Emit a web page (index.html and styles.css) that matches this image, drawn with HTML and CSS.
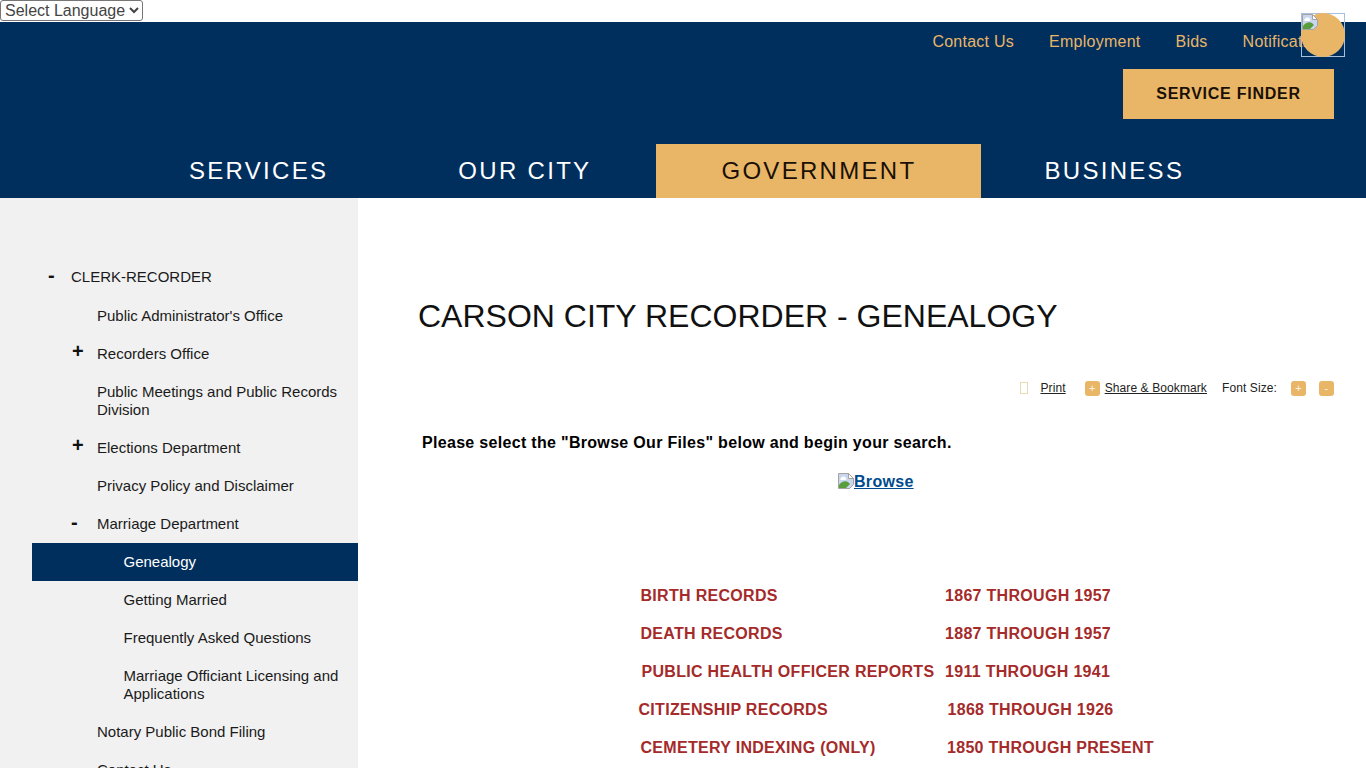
FILE: index.html
```html
<!DOCTYPE html>
<html lang="en">
  <head>
    <meta charset="UTF-8" />
    <meta name="viewport" content="width=device-width, initial-scale=1.0" />
    <title>Carson City Recorder - Genealogy</title>
    <link rel="stylesheet" href="styles.css">
  </head>
  <body>
    <div class="language-bar">
      <select class="language-select">
        <option>Select Language</option>
      </select>
    </div>

    <header class="site-header">
      <div class="top-links">
        <a href="#">Contact Us</a>
        <a href="#">Employment</a>
        <a href="#">Bids</a>
        <a href="#">Notifications</a>
      </div>
      <div class="search-toggle">
        <span class="search-circle"></span>
        <svg class="broken-img" width="16" height="16" viewBox="0 0 16 16">
          <path d="M.5.5h10l5 5v6l-4 4H.5z" fill="#c9d6ee" stroke="#a3a3a3" />
          <path d="M10.5.5v5h5z" fill="#fff" stroke="#a3a3a3" />
          <path d="M3 5c1-2 4-2 5 0 1 1 0 2-1 2H3C2 7 2 5 3 5z" fill="#fff" />
          <path d="M1 15v-3c2-3 6-5 9-3l2 2-4 4z" fill="#5a9e3c" />
        </svg>
      </div>
      <div class="finder-row">
        <a class="finder-btn" href="#">SERVICE FINDER</a>
      </div>
      <nav class="main-nav">
        <a href="#">SERVICES</a>
        <a href="#">OUR CITY</a>
        <a class="active" href="#">GOVERNMENT</a>
        <a class="last" href="#">BUSINESS</a>
      </nav>
    </header>

    <div class="page-body">
      <aside class="sidebar">
        <ul class="side-menu">
          <li class="level-1"><span class="toggle">-</span><a href="#">CLERK-RECORDER</a></li>
          <li class="level-2"><a href="#">Public Administrator's Office</a></li>
          <li class="level-2"><span class="toggle plus">+</span><a href="#">Recorders Office</a></li>
          <li class="level-2"><a href="#">Public Meetings and Public Records Division</a></li>
          <li class="level-2"><span class="toggle plus">+</span><a href="#">Elections Department</a></li>
          <li class="level-2"><a href="#">Privacy Policy and Disclaimer</a></li>
          <li class="level-2"><span class="toggle">-</span><a href="#">Marriage Department</a></li>
          <li class="level-3 current"><a href="#">Genealogy</a></li>
          <li class="level-3"><a href="#">Getting Married</a></li>
          <li class="level-3"><a href="#">Frequently Asked Questions</a></li>
          <li class="level-3"><a href="#">Marriage Officiant Licensing and Applications</a></li>
          <li class="level-2"><a href="#">Notary Public Bond Filing</a></li>
          <li class="level-2"><a href="#">Contact Us</a></li>
        </ul>
      </aside>

      <main class="content">
        <h1>CARSON CITY RECORDER - GENEALOGY</h1>

        <div class="page-tools">
          <span class="print-icon"></span>
          <a class="print-link" href="#">Print</a>
          <span class="tool-btn share-btn">+</span>
          <a class="share-link" href="#">Share &amp; Bookmark</a>
          <span class="font-label">Font Size:</span>
          <span class="tool-btn">+</span>
          <span class="tool-btn minus-btn">-</span>
        </div>

        <p class="intro">Please select the "Browse Our Files" below and begin your search.</p>

        <p class="browse">
          <a href="#">
            <svg class="browse-img" width="16" height="16" viewBox="0 0 16 16">
              <path d="M.5.5h10l5 5v6l-4 4H.5z" fill="#c9d6ee" stroke="#a3a3a3" />
              <path d="M10.5.5v5h5z" fill="#fff" stroke="#a3a3a3" />
              <path d="M3 5c1-2 4-2 5 0 1 1 0 2-1 2H3C2 7 2 5 3 5z" fill="#fff" />
              <path d="M1 15v-3c2-3 6-5 9-3l2 2-4 4z" fill="#5a9e3c" />
            </svg>Browse</a>
        </p>

        <div class="records">
          <div class="record"><span>BIRTH RECORDS</span><span>1867 THROUGH 1957</span></div>
          <div class="record"><span>DEATH RECORDS</span><span>1887 THROUGH 1957</span></div>
          <div class="record health"><span>PUBLIC HEALTH OFFICER REPORTS</span><span>1911 THROUGH 1941</span></div>
          <div class="record citizen"><span>CITIZENSHIP RECORDS</span><span>1868 THROUGH 1926</span></div>
          <div class="record cemetery"><span>CEMETERY INDEXING (ONLY)</span><span>1850 THROUGH PRESENT</span></div>
        </div>
      </main>
    </div>
  </body>
</html>
```

FILE: styles.css
```css
html,
body {
  margin: 0;
  padding: 0;
  background-color: #fff;
  font-family: "Liberation Sans", Arial, sans-serif;
  color: #111;
}
a {
  text-decoration: none;
  color: inherit;
}

.language-bar {
  height: 22px;
}
.language-select {
  display: block;
  width: 143px;
  height: 21px;
  margin: 0;
  padding: 0;
  font-family: "Liberation Sans", Arial, sans-serif;
  font-size: 16px;
  color: #444;
  background-color: #fff;
  border: 1px solid #767676;
  border-radius: 3px;
}

.site-header {
  position: relative;
  height: 176px;
  background-color: #002e5d;
}
.top-links {
  display: flex;
  justify-content: flex-end;
  gap: 35px;
  height: 47px;
  padding: 11px 0 0;
  margin-right: 33px;
  box-sizing: border-box;
  font-size: 16px;
  line-height: 18px;
  letter-spacing: 0.25px;
  color: #e9b667;
  white-space: nowrap;
}
.search-toggle {
  position: absolute;
  top: -9px;
  left: 1301px;
  width: 42px;
  height: 42px;
  border: 1px solid #a9c0dc;
}
.search-circle {
  position: absolute;
  top: -1px;
  left: -1px;
  width: 44px;
  height: 44px;
  border-radius: 50%;
  background-color: #e9b667;
}
.broken-img {
  position: absolute;
  top: 0;
  left: 0;
}
.finder-row {
  display: flex;
  justify-content: flex-end;
  padding-right: 32px;
}
.finder-btn {
  display: block;
  width: 211px;
  height: 50px;
  line-height: 50px;
  text-align: center;
  background-color: #e9b667;
  color: #1a1005;
  font-size: 16px;
  font-weight: bold;
  letter-spacing: 0.75px;
}
.main-nav {
  display: flex;
  margin-top: 25px;
  padding-left: 124px;
}
.main-nav a {
  height: 54px;
  line-height: 54px;
  padding: 0 65px;
  font-size: 24px;
  letter-spacing: 2.3px;
  color: #fff;
}
.main-nav a.active {
  background-color: #e9b667;
  color: #1a1005;
}
.main-nav a.last {
  padding-left: 63px;
}

.page-body {
  display: flex;
}
.sidebar {
  flex: 0 0 358px;
  box-sizing: border-box;
  min-height: 600px;
  padding: 60px 0 0 32px;
  background-color: #f1f1f1;
}
.side-menu {
  margin: 0;
  padding: 0;
  list-style: none;
  font-size: 15px;
  line-height: 18px;
  color: #1a1a1a;
}
.side-menu li {
  position: relative;
  padding: 10px 20px 10px 0;
}
.side-menu li.level-1 {
  padding-left: 39px;
  padding-bottom: 11px;
}
.side-menu li.level-2 {
  padding-left: 65px;
}
.side-menu li.level-3 {
  padding-left: 91.5px;
  padding-right: 10px;
}
.side-menu li.current {
  background-color: #002e5d;
  color: #fff;
}
.toggle {
  position: absolute;
  top: 7px;
  left: 39px;
  font-size: 20px;
  line-height: 20px;
  font-weight: bold;
  color: #111;
}
.toggle.plus {
  top: 6px;
  left: 40px;
}
.level-1 .toggle {
  left: 16px;
}

.content {
  flex: 1;
  min-width: 0;
  padding: 0 32px 0 60px;
}
.content h1 {
  margin: 99px 0 0;
  font-size: 32px;
  line-height: 38px;
  font-weight: normal;
  color: #111;
}
.page-tools {
  display: flex;
  justify-content: flex-end;
  align-items: center;
  margin-top: 44px;
  height: 18px;
  font-size: 12px;
  letter-spacing: 0.1px;
  color: #222;
}
.page-tools a {
  text-decoration: underline;
}
.print-icon {
  width: 6px;
  height: 10px;
  border: 1px solid #ecd9b6;
  margin-right: 12px;
}
.print-link {
  margin-right: 19px;
}
.tool-btn {
  width: 15px;
  height: 15px;
  border-radius: 3px;
  background-color: #e9b667;
  color: #fdf3e0;
  font-size: 11px;
  line-height: 15px;
  text-align: center;
}
.share-btn {
  margin-right: 5px;
}
.share-link {
  margin-right: 15px;
}
.font-label {
  margin-right: 14px;
}
.minus-btn {
  margin-left: 13px;
}
.intro {
  margin: 37px 0 0 4px;
  font-size: 16px;
  line-height: 18px;
  font-weight: bold;
  letter-spacing: 0.31px;
  color: #000;
}
.browse {
  margin: 21px 0 0 420px;
  font-size: 16px;
  line-height: 18px;
  font-weight: bold;
  letter-spacing: 0.3px;
}
.browse a {
  color: #004b8d;
  text-decoration: underline;
}
.browse-img {
  vertical-align: -2px;
}
.records {
  margin: 96px 0 0 222.5px;
  font-size: 16px;
  line-height: 18px;
  font-weight: bold;
  color: #a52a2a;
  letter-spacing: 0.3px;
}
.record {
  display: grid;
  grid-template-columns: 304.5px auto;
  margin-bottom: 20px;
  white-space: nowrap;
}
.record.health {
  margin-left: 1px;
  grid-template-columns: 303.5px auto;
}
.record.citizen {
  margin-left: -2px;
  grid-template-columns: 309px auto;
}
.record.cemetery {
  grid-template-columns: 306.5px auto;
}
```
